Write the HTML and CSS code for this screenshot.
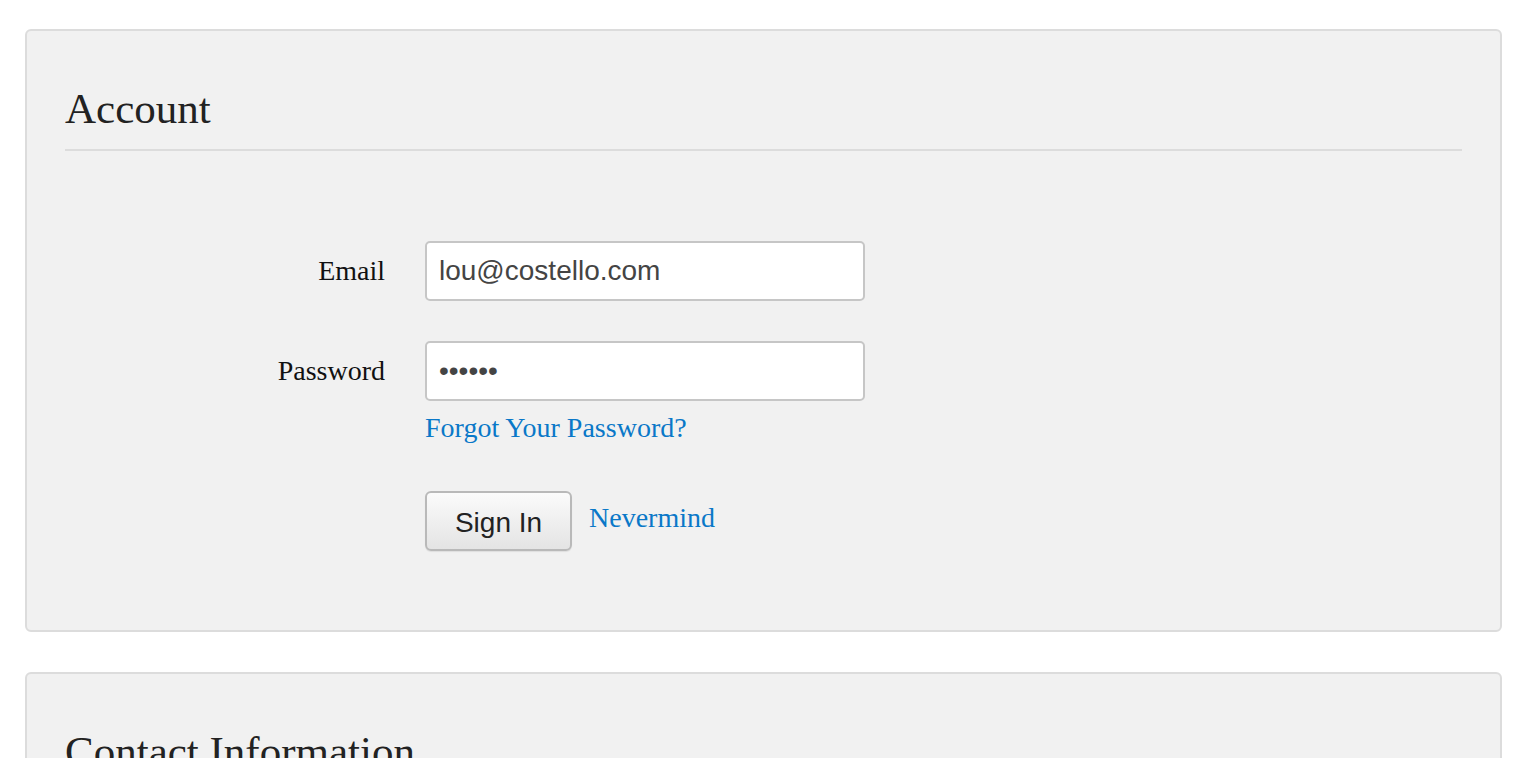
FILE: index.html
```html
<!DOCTYPE html>
<html>
<head>
<meta charset="utf-8">
<link rel="stylesheet" href="styles.css">
</head>
<body>
<div class="page">
  <section class="card">
    <h2 class="card-title">Account</h2>
    <form class="form">
      <label class="label" for="email">Email</label>
      <div class="field">
        <input class="input" id="email" type="text" value="lou@costello.com">
      </div>
      <label class="label" for="pw">Password</label>
      <div class="field">
        <input class="input" id="pw" type="password" value="secret">
        <a class="link forgot" href="#">Forgot Your Password?</a>
      </div>
      <div></div>
      <div class="actions">
        <button class="btn" type="button">Sign In</button>
        <a class="link nevermind" href="#">Nevermind</a>
      </div>
    </form>
  </section>
  <section class="card">
    <h2 class="card-title">Contact Information</h2>
  </section>
</div>
</body>
</html>
```
FILE: styles.css
```css
html, body {
  margin: 0;
  padding: 0;
  background: #fff;
}
body {
  font-family: "Liberation Serif", "Times New Roman", serif;
  color: #111;
  overflow: hidden;
}
.page {
  padding: 29px 32px 0 25px;
  display: flex;
  flex-direction: column;
  gap: 40px;
}
.card {
  background: #f1f1f1;
  border: 2px solid #dcdcdc;
  border-radius: 6px;
  padding: 55px 38px 79px 38px;
}
.card-title {
  margin: 0;
  font-weight: normal;
  font-size: 43px;
  line-height: 46px;
  color: #222;
  padding-bottom: 17px;
  border-bottom: 2px solid #dcdcdc;
}
.form {
  display: grid;
  grid-template-columns: 320px 440px;
  column-gap: 40px;
  row-gap: 40px;
  margin-top: 90px;
}
.label {
  font-size: 28px;
  line-height: 60px;
  text-align: right;
  color: #111;
}
.field {
  display: flex;
  flex-direction: column;
  align-items: flex-start;
}
.input {
  box-sizing: border-box;
  width: 440px;
  height: 60px;
  border: 2px solid #c6c6c6;
  border-radius: 5px;
  background: #fff;
  padding: 0 12px;
  font-family: "Liberation Sans", Arial, sans-serif;
  font-size: 28px;
  color: #444;
  outline: none;
}
.link {
  color: #0a78c8;
  text-decoration: none;
  font-size: 28px;
}
.forgot {
  margin-top: 9px;
  line-height: 36px;
}
.actions {
  display: flex;
  align-items: center;
  gap: 17px;
  margin-top: 5px;
}
.btn {
  box-sizing: border-box;
  width: 147px;
  height: 60px;
  border: 2px solid #b9b9b9;
  border-radius: 6px;
  background: linear-gradient(#fbfbfb, #e4e4e4);
  font-family: "Liberation Sans", Arial, sans-serif;
  font-size: 28px;
  color: #222;
  padding: 4px 0 0 0;
  box-shadow: 0 1px 1px rgba(0,0,0,0.08);
}
.nevermind {
  margin-top: -6px;
}
```
